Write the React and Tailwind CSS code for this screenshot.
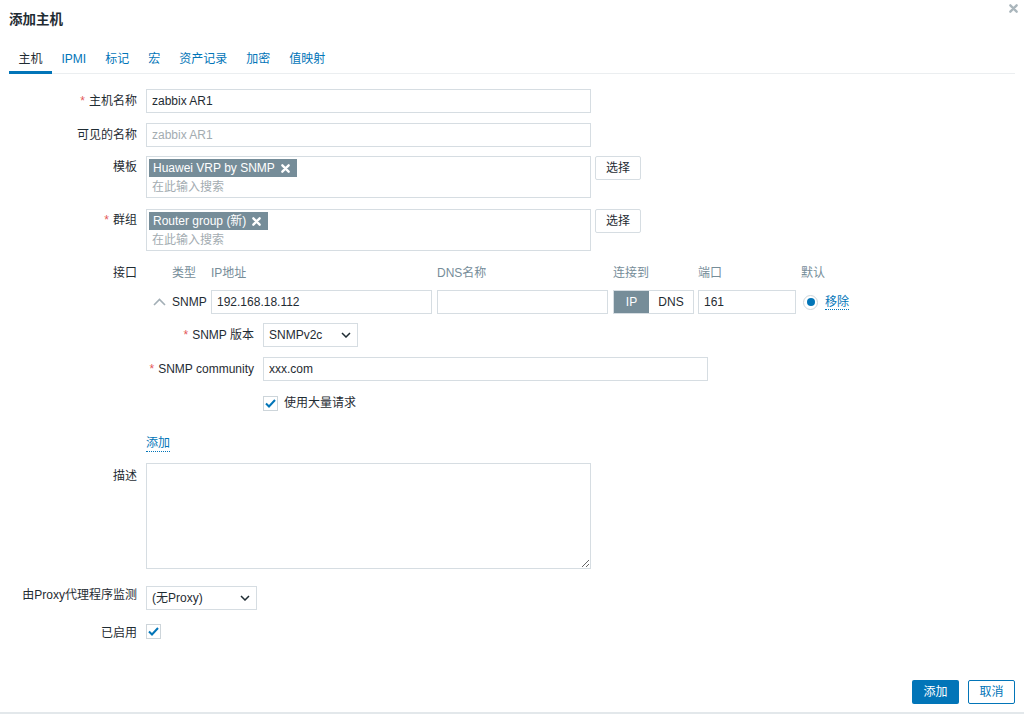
import React from "react";

const Star = () => <span className="text-[#e45959] mr-[4px]">*</span>;

const Chevron = () => (
  <svg width="10" height="6" viewBox="0 0 10 6" className="shrink-0">
    <path d="M1 1 L5 5 L9 1" fill="none" stroke="#1f2c33" strokeWidth="1.5" />
  </svg>
);

const XIcon = ({ color = "#fff", size = 9 }) => (
  <svg width={size} height={size} viewBox="0 0 10 10" className="shrink-0">
    <path d="M1.5 1.5 L8.5 8.5 M8.5 1.5 L1.5 8.5" stroke={color} strokeWidth="2.6" strokeLinecap="round" />
  </svg>
);

const Check = () => (
  <svg width="11" height="9" viewBox="0 0 11 9">
    <path d="M1 4.5 L4 7.5 L10 1" fill="none" stroke="#0275b8" strokeWidth="2" />
  </svg>
);

const Checkbox = () => (
  <div className="w-[15px] h-[15px] border border-[#cdd5da] bg-white flex items-center justify-center shrink-0">
    <Check />
  </div>
);

const Tag = ({ children }) => (
  <div className="h-[18px] inline-flex items-center bg-[#768d99] text-white pl-[4px] pr-[7px] gap-[6px] leading-[18px]">
    <span>{children}</span>
    <XIcon />
  </div>
);

const Label = ({ req, children, className = "" }) => (
  <div className={"w-[137px] shrink-0 text-right " + className}>
    {req && <Star />}
    {children}
  </div>
);

const Row = ({ children, className = "" }) => (
  <div className={"flex gap-[9px] items-start " + className}>{children}</div>
);

const inputCls =
  "h-[24px] border border-[#d6dde2] bg-white px-[5px] text-[12px] text-[#1f2c33] outline-none placeholder:text-[#a3acb1]";

const SelectBtn = () => (
  <div className="ml-[4px] w-[46px] h-[24px] border border-[#d6dde2] rounded-[2px] bg-white flex items-center justify-center">
    选择
  </div>
);

const MultiSelect = ({ tag }) => (
  <div className="w-[445px] h-[42px] border border-[#d6dde2] bg-white px-[2px] pt-[2px]">
    <Tag>{tag}</Tag>
    <div className="h-[20px] leading-[20px] pl-[3px] text-[#a3acb1]">在此输入搜索</div>
  </div>
);

export default function App() {
  const tabs = ["主机", "IPMI", "标记", "宏", "资产记录", "加密", "值映射"];
  return (
    <div className="w-[1024px] h-[714px] bg-white relative flex flex-col text-[12px] text-[#1f2c33] font-['Liberation_Sans','Noto_Sans_CJK_SC',sans-serif] border-b-2 border-[#e3e8eb]">
      <div className="h-[41px] flex items-center px-[9px]">
        <h1 className="font-bold text-[13.5px] text-[#1f2c33]">添加主机</h1>
      </div>
      <div className="absolute top-[4px] right-[6px]">
        <XIcon color="#aab6bc" size={9} />
      </div>

      <div className="mx-[9px] flex border-b border-[#ebeef0]">
        {tabs.map((t, i) => (
          <div
            key={t}
            className={
              "px-[9.5px] pt-[11px] pb-[5px] leading-[14px] -mb-px border-b-[3px] " +
              (i === 0 ? "border-[#0275b8] text-[#1f2c33]" : "border-transparent text-[#0275b8]")
            }
          >
            {t}
          </div>
        ))}
      </div>

      <div className="mt-[15px] flex flex-col">
        <Row>
          <Label req className="leading-[24px]">主机名称</Label>
          <input readOnly className={inputCls + " w-[445px]"} defaultValue="zabbix AR1" />
        </Row>
        <Row className="mt-[10px]">
          <Label className="leading-[24px]">可见的名称</Label>
          <input readOnly className={inputCls + " w-[445px]"} placeholder="zabbix AR1" />
        </Row>
        <Row className="mt-[9px]">
          <Label className="leading-[23px]">模板</Label>
          <div className="flex items-start">
            <MultiSelect tag="Huawei VRP by SNMP" />
            <SelectBtn />
          </div>
        </Row>
        <Row className="mt-[11px]">
          <Label req className="leading-[23px]">群组</Label>
          <div className="flex items-start">
            <MultiSelect tag="Router group (新)" />
            <SelectBtn />
          </div>
        </Row>

        <Row className="mt-[12px]">
          <Label className="leading-[20px]">接口</Label>
          <div className="flex flex-col">
            <div className="flex h-[20px] leading-[20px] text-[#768d99]">
              <div className="w-[26px]" />
              <div className="w-[39px]">类型</div>
              <div className="w-[221px]">IP地址</div>
              <div className="w-[171px] ml-[5px]">DNS名称</div>
              <div className="w-[81px] ml-[5px]">连接到</div>
              <div className="w-[98px] ml-[4px]">端口</div>
              <div className="ml-[5px]">默认</div>
            </div>
            <div className="flex items-center mt-[7px] h-[24px]">
              <div className="w-[26px] flex justify-center">
                <svg width="13" height="8" viewBox="0 0 13 8">
                  <path d="M1 7 L6.5 1.5 L12 7" fill="none" stroke="#a3afb6" strokeWidth="1.6" />
                </svg>
              </div>
              <div className="w-[39px]">SNMP</div>
              <input readOnly className={inputCls + " w-[221px]"} defaultValue="192.168.18.112" />
              <input readOnly className={inputCls + " w-[171px] ml-[5px]"} defaultValue="" />
              <div className="w-[81px] ml-[5px] h-[24px] flex border border-[#d6dde2]">
                <div className="w-[35px] bg-[#768d99] text-white flex items-center justify-center">IP</div>
                <div className="flex-1 flex items-center justify-center">DNS</div>
              </div>
              <input readOnly className={inputCls + " w-[98px] ml-[4px]"} defaultValue="161" />
              <div className="ml-[7px] w-[15px] h-[15px] rounded-full border border-[#cdd5da] flex items-center justify-center">
                <div className="w-[8px] h-[8px] rounded-full bg-[#0275b8]" />
              </div>
              <div className="ml-[7px] text-[#0275b8] border-b border-dotted border-[#0275b8] leading-[14px]">移除</div>
            </div>

            <div className="flex gap-[9px] mt-[9px] items-center">
              <div className="w-[108px] text-right"><Star />SNMP 版本</div>
              <div className="w-[95px] h-[24px] border border-[#d6dde2] flex items-center justify-between pl-[5px] pr-[6px]">
                <span>SNMPv2c</span>
                <Chevron />
              </div>
            </div>
            <div className="flex gap-[9px] mt-[10px] items-center">
              <div className="w-[108px] text-right whitespace-nowrap"><Star />SNMP community</div>
              <input readOnly className={inputCls + " w-[445px]"} defaultValue="xxx.com" />
            </div>
            <div className="flex mt-[13px] items-center">
              <div className="w-[117px]" />
              <Checkbox />
              <span className="ml-[6px]">使用大量请求</span>
            </div>
            <div className="mt-[24px] flex">
              <span className="text-[#0275b8] border-b border-dotted border-[#0275b8] leading-[15px]">添加</span>
            </div>
          </div>
        </Row>

        <Row className="mt-[11px]">
          <Label className="leading-[26px]">描述</Label>
          <textarea readOnly className="w-[445px] h-[106px] border border-[#d6dde2] outline-none" />
        </Row>

        <Row className="mt-[17px] items-center">
          <Label>由Proxy代理程序监测</Label>
          <div className="w-[111px] h-[24px] border border-[#d6dde2] flex items-center justify-between pl-[5px] pr-[6px]">
            <span>(无Proxy)</span>
            <Chevron />
          </div>
        </Row>
        <Row className="mt-[14px] items-center">
          <Label>已启用</Label>
          <Checkbox />
        </Row>
      </div>

      <div className="mt-auto flex justify-end gap-[9px] pr-[9px] pb-[8px]">
        <div className="w-[47px] h-[24px] bg-[#0275b8] text-white rounded-[2px] flex items-center justify-center">添加</div>
        <div className="w-[47px] h-[24px] border border-[#0275b8] text-[#0275b8] rounded-[2px] flex items-center justify-center">取消</div>
      </div>
    </div>
  );
}
